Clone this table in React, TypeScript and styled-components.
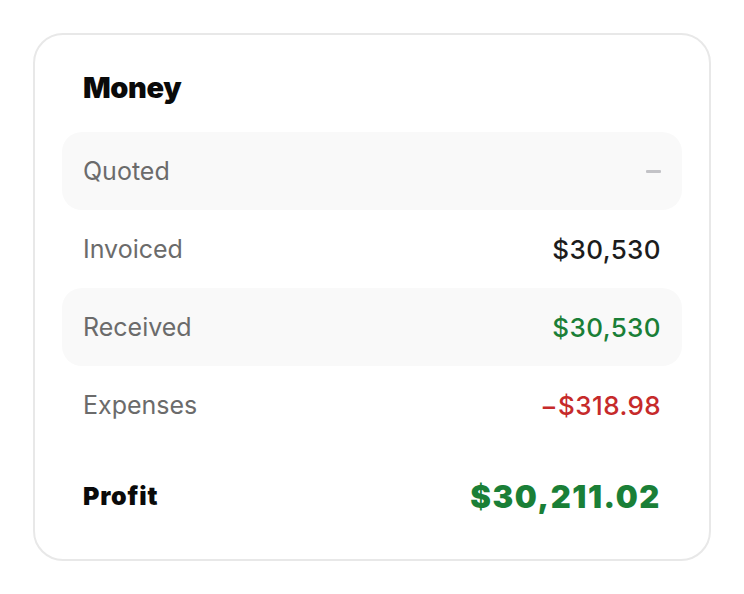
import React from "react";
import styled, { createGlobalStyle } from "styled-components";

const GlobalStyle = createGlobalStyle`
  html, body {
    margin: 0;
    padding: 0;
    background: #ffffff;
  }
  body {
    font-family: Inter, "Noto Sans", "Liberation Sans", sans-serif;
    -webkit-font-smoothing: antialiased;
  }
`;

const Page = styled.div`
  padding: 33px;
`;

const Card = styled.section`
  border: 2px solid #e8e8e8;
  border-radius: 30px;
  background: #ffffff;
  padding: 35px 27px 24px;
`;

const Title = styled.h2`
  margin: 0 0 27px 21px;
  font-size: 29px;
  line-height: 35px;
  font-weight: 900;
  color: #0a0a0a;
  letter-spacing: -0.4px;
`;

const List = styled.div`
  display: flex;
  flex-direction: column;
`;

const Row = styled.div<{ $shaded?: boolean }>`
  display: flex;
  align-items: center;
  justify-content: space-between;
  height: 78px;
  padding: 0 21px;
  border-radius: 20px;
  background: ${(p) => (p.$shaded ? "#f9f9f9" : "transparent")};
`;

const Label = styled.span`
  font-size: 25px;
  color: #6b6b6b;
  font-weight: 400;
`;

type Tone = "plain" | "muted" | "good" | "bad";

const toneColor: Record<Tone, string> = {
  plain: "#1c1c1c",
  muted: "#c3c3c7",
  good: "#1a7f37",
  bad: "#c62a2a",
};

const Value = styled.span<{ $tone: Tone }>`
  font-size: 26px;
  font-weight: 500;
  letter-spacing: 0.4px;
  color: ${(p) => toneColor[p.$tone]};
`;

const Dash = styled.span`
  display: inline-block;
  width: 15px;
  height: 3px;
  border-radius: 1px;
  background: #c3c3c7;
`;

const TotalRow = styled(Row)`
  margin-top: 13px;
`;

const TotalLabel = styled.span`
  font-size: 25px;
  font-weight: 900;
  letter-spacing: 0.8px;
  color: #0a0a0a;
`;

const TotalValue = styled.span`
  font-size: 31px;
  font-weight: 900;
  letter-spacing: 1.6px;
  color: #1a7f37;
`;

const rows: { label: string; value: string | null; tone: Tone }[] = [
  { label: "Quoted", value: null, tone: "muted" },
  { label: "Invoiced", value: "$30,530", tone: "plain" },
  { label: "Received", value: "$30,530", tone: "good" },
  { label: "Expenses", value: "−$318.98", tone: "bad" },
];

const App: React.FC = () => {
  return (
    <Page>
      <GlobalStyle />
      <Card>
        <Title>Money</Title>
        <List>
          {rows.map((r, i) => (
            <Row key={r.label} $shaded={i % 2 === 0}>
              <Label>{r.label}</Label>
              {r.value ? (
                <Value $tone={r.tone}>{r.value}</Value>
              ) : (
                <Dash aria-label="none" />
              )}
            </Row>
          ))}
          <TotalRow>
            <TotalLabel>Profit</TotalLabel>
            <TotalValue>$30,211.02</TotalValue>
          </TotalRow>
        </List>
      </Card>
    </Page>
  );
};

export default App;
